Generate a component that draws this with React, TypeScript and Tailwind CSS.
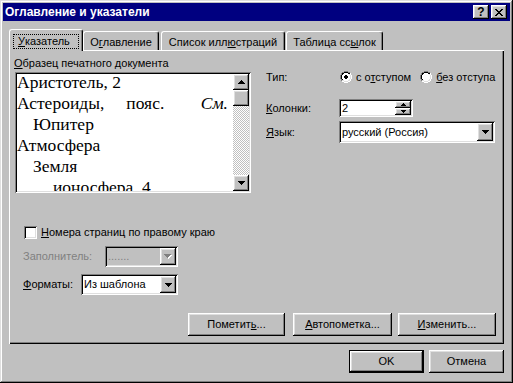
import React from "react";

const raised =
  "shadow-[inset_-1px_-1px_#000000,inset_1px_1px_#ffffff,inset_-2px_-2px_#808080,inset_2px_2px_#dfdfdf]";
const sunken =
  "shadow-[inset_1px_1px_#808080,inset_-1px_-1px_#ffffff,inset_2px_2px_#000000,inset_-2px_-2px_#dfdfdf]";

const COLORS: Record<string, string> = {
  "#": "#000000",
  K: "#000000",
  D: "#000000",
  G: "#808080",
  w: "#ffffff",
  W: "#ffffff",
  L: "#dfdfdf",
};

function Pix({ rows }: { rows: string[] }) {
  const h = rows.length;
  const w = rows[0].length;
  return (
    <svg
      width={w}
      height={h}
      viewBox={`0 0 ${w} ${h}`}
      shapeRendering="crispEdges"
      className="block shrink-0"
    >
      {rows.map((r, y) =>
        r
          .split("")
          .map((c, x) =>
            c === "." ? null : (
              <rect key={`${x}-${y}`} x={x} y={y} width={1} height={1} fill={COLORS[c]} />
            )
          )
      )}
    </svg>
  );
}

const CLOSE = [
  "##....##",
  ".##..##.",
  "..####..",
  "...##...",
  "..####..",
  ".##..##.",
  "##....##",
];
const DOWN = ["#######", ".#####.", "..###..", "...#..."];
const UP = ["...#...", "..###..", ".#####.", "#######"];
const DOWN_DIS = ["GGGGGGG.", ".GGGGGWW", "..GGGWW.", "...GWW..", "....W..."];
const SUP = ["..#..", ".###.", "#####"];
const SDOWN = ["#####", ".###.", "..#.."];

const RADIO_ON = [
  "....GGGG....",
  "..GGKKKKGG..",
  ".GKKwwwwKKW.",
  ".GKwwwwwwLW.",
  "GKwwwDDwwwLW",
  "GKwwDDDDwwLW",
  "GKwwDDDDwwLW",
  "GKwwwDDwwwLW",
  ".GKwwwwwwLW.",
  ".GLLwwwwLLW.",
  "..WWLLLLWW..",
  "....WWWW....",
];
const RADIO_OFF = [
  "....GGGG....",
  "..GGKKKKGG..",
  ".GKKwwwwKKW.",
  ".GKwwwwwwLW.",
  "GKwwwwwwwwLW",
  "GKwwwwwwwwLW",
  "GKwwwwwwwwLW",
  "GKwwwwwwwwLW",
  ".GKwwwwwwLW.",
  ".GLLwwwwLLW.",
  "..WWLLLLWW..",
  "....WWWW....",
];

function U({ children }: { children: React.ReactNode }) {
  return <span className="underline">{children}</span>;
}

function Combo({
  wClass,
  hClass,
  text,
  disabled,
}: {
  wClass: string;
  hClass: string;
  text: string;
  disabled?: boolean;
}) {
  return (
    <div
      className={`${wClass} ${hClass} ${sunken} p-[2px] flex ${
        disabled ? "bg-[#c0c0c0]" : "bg-white"
      }`}
    >
      <div
        className={`flex-1 flex items-center pl-[1px] whitespace-nowrap ${
          disabled ? "text-[#808080]" : ""
        }`}
      >
        {text}
      </div>
      <div
        className={`w-[16px] bg-[#c0c0c0] ${raised} flex items-center justify-center`}
      >
        <Pix rows={disabled ? DOWN_DIS : DOWN} />
      </div>
    </div>
  );
}

function Btn({
  wClass,
  children,
  def,
}: {
  wClass: string;
  children: React.ReactNode;
  def?: boolean;
}) {
  return (
    <div
      className={`${wClass} h-[23px] flex items-center justify-center bg-[#c0c0c0] ${
        def
          ? "shadow-[inset_0_0_0_1px_#000000,inset_-2px_-2px_#000000,inset_2px_2px_#ffffff,inset_-3px_-3px_#808080,inset_3px_3px_#dfdfdf]"
          : raised
      }`}
    >
      {children}
    </div>
  );
}

export default function App() {
  return (
    <div className="w-[513px] h-[383px] bg-[#c0c0c0] p-[3px] flex flex-col font-['Liberation_Sans',Arial,sans-serif] text-[11px] text-black leading-none select-none shadow-[inset_-1px_-1px_#000000,inset_1px_1px_#dfdfdf,inset_-2px_-2px_#808080,inset_2px_2px_#ffffff]">
      {/* Title bar */}
      <div className="h-[18px] bg-[#000080] flex items-center pl-[2px] pr-[3px]">
        <span className="flex-1 text-white font-bold text-[12px] whitespace-nowrap">
          Оглавление и указатели
        </span>
        <div
          className={`w-[16px] h-[14px] bg-[#c0c0c0] ${raised} flex items-center justify-center font-bold text-[12px] pb-[1px]`}
        >
          ?
        </div>
        <div
          className={`w-[16px] h-[14px] ml-[2px] bg-[#c0c0c0] ${raised} flex items-center justify-center`}
        >
          <Pix rows={CLOSE} />
        </div>
      </div>

      <div className="px-[6px] pt-[8px] flex flex-col">
        {/* Tabs */}
        <div className="h-[21px] flex items-end relative z-10">
          <div className="w-[74px] h-[22px] -mb-[1px] bg-[#c0c0c0] border-t border-l border-white border-r border-r-black rounded-t-[3px] shadow-[inset_-1px_0_#808080] pt-[4px] pl-[3px]">
            <div className="w-[66px] h-[15px] border border-dotted border-black flex items-center pl-[4px]">
              <U>У</U>казатель
            </div>
          </div>
          <div className="w-[76px] h-[19px] border-t border-l border-white border-r border-r-black rounded-t-[3px] shadow-[inset_-1px_0_#808080] flex justify-center pt-[5px] whitespace-nowrap">
            О<U>г</U>лавление
          </div>
          <div className="ml-[2px] w-[124px] h-[19px] border-t border-l border-white border-r border-r-black rounded-t-[3px] shadow-[inset_-1px_0_#808080] flex justify-center pt-[5px] whitespace-nowrap">
            Список илл<U>ю</U>страций
          </div>
          <div className="ml-[1px] w-[97px] h-[19px] border-t border-l border-white border-r border-r-black rounded-t-[3px] shadow-[inset_-1px_0_#808080] flex justify-center pt-[5px] whitespace-nowrap">
            Таблица сс<U>ы</U>лок
          </div>
        </div>

        {/* Panel */}
        <div className="h-[294px] flex flex-col pt-[6px] pl-[5px] pr-[8px] pb-[8px] shadow-[inset_1px_1px_#ffffff,inset_-1px_-1px_#000000,inset_-2px_-2px_#808080]">
          <div className="flex">
            <div className="w-[252px] flex flex-col">
              <div className="h-[14px] flex items-center whitespace-nowrap">
                <U>О</U>бразец печатного документа
              </div>
              <div
                className={`mt-[2px] ml-[1px] w-[236px] h-[121px] bg-white ${sunken} p-[2px] flex`}
              >
                <div className="flex-1 overflow-hidden font-['Liberation_Serif','Times_New_Roman',serif] text-[17.5px] leading-[21px] pr-[5px] whitespace-nowrap">
                  <div className="-mt-[2px]">
                    <div>Аристотель, 2</div>
                    <div className="flex">
                      <span>Астероиды,</span>
                      <span className="ml-[22px]">пояс.</span>
                      <span className="ml-auto italic">См.</span>
                    </div>
                    <div className="pl-[16px]">Юпитер</div>
                    <div>Атмосфера</div>
                    <div className="pl-[16px]">Земля</div>
                    <div className="pl-[36px]">ионосфера, 4</div>
                  </div>
                </div>
                <div className="w-[16px] flex flex-col">
                  <div
                    className={`h-[16px] bg-[#c0c0c0] ${raised} flex items-center justify-center`}
                  >
                    <Pix rows={UP} />
                  </div>
                  <div className={`h-[16px] bg-[#c0c0c0] ${raised}`} />
                  <div className="flex-1 bg-[repeating-conic-gradient(#c0c0c0_0%_25%,#ffffff_0%_50%)] bg-[length:2px_2px]" />
                  <div
                    className={`h-[16px] bg-[#c0c0c0] ${raised} flex items-center justify-center`}
                  >
                    <Pix rows={DOWN} />
                  </div>
                </div>
              </div>
            </div>

            <div className="flex-1 pt-[11px] flex flex-col">
              <div className="h-[20px] flex items-center whitespace-nowrap">
                <div className="w-[73px]">Тип:</div>
                <div className="ml-[1px] flex items-center">
                  <Pix rows={RADIO_ON} />
                  <span className="ml-[4px]">
                    с о<U>т</U>ступом
                  </span>
                </div>
                <div className="ml-[9px] flex items-center">
                  <Pix rows={RADIO_OFF} />
                  <span className="ml-[4px]">
                    <U>б</U>ез отступа
                  </span>
                </div>
              </div>
              <div className="mt-[12px] h-[18px] flex items-center">
                <div className="w-[73px]">
                  <U>К</U>олонки:
                </div>
                <div className={`w-[74px] h-[18px] bg-white ${sunken} p-[2px] flex`}>
                  <div className="flex-1 flex items-center pl-[1px]">2</div>
                  <div className="w-[16px] flex flex-col">
                    <div
                      className={`h-[7px] bg-[#c0c0c0] ${raised} flex items-center justify-center`}
                    >
                      <Pix rows={SUP} />
                    </div>
                    <div
                      className={`h-[7px] bg-[#c0c0c0] ${raised} flex items-center justify-center`}
                    >
                      <Pix rows={SDOWN} />
                    </div>
                  </div>
                </div>
              </div>
              <div className="mt-[4px] h-[22px] flex items-center">
                <div className="w-[73px]">
                  <U>Я</U>зык:
                </div>
                <Combo wClass="w-[156px]" hClass="h-[22px]" text="русский (Россия)" />
              </div>
            </div>
          </div>

          <div className="mt-[31px] h-[16px] flex items-center pl-[10px] whitespace-nowrap">
            <div className={`w-[13px] h-[13px] bg-white ${sunken}`} />
            <span className="ml-[4px]">
              <U>Н</U>омера страниц по правому краю
            </span>
          </div>
          <div className="mt-[6px] h-[21px] flex items-center pl-[9px]">
            <div className="w-[82px] text-[#808080]">Заполнитель:</div>
            <Combo wClass="w-[73px]" hClass="h-[21px]" text="......." disabled />
          </div>
          <div className="mt-[7px] h-[21px] flex items-center pl-[9px]">
            <div className="w-[58px]">
              <U>Ф</U>орматы:
            </div>
            <Combo wClass="w-[97px]" hClass="h-[21px]" text="Из шаблона" />
          </div>

          <div className="mt-auto flex justify-end">
            <Btn wClass="w-[97px]">
              Пометит<U>ь</U>...
            </Btn>
            <div className="ml-[8px]">
              <Btn wClass="w-[99px]">
                <U>А</U>втопометка...
              </Btn>
            </div>
            <div className="ml-[6px]">
              <Btn wClass="w-[98px]">
                <U>И</U>зменить...
              </Btn>
            </div>
          </div>
        </div>

        {/* Bottom buttons */}
        <div className="mt-[6px] flex justify-end gap-[5px]">
          <Btn wClass="w-[75px]" def>
            OK
          </Btn>
          <Btn wClass="w-[75px]">Отмена</Btn>
        </div>
      </div>
    </div>
  );
}
